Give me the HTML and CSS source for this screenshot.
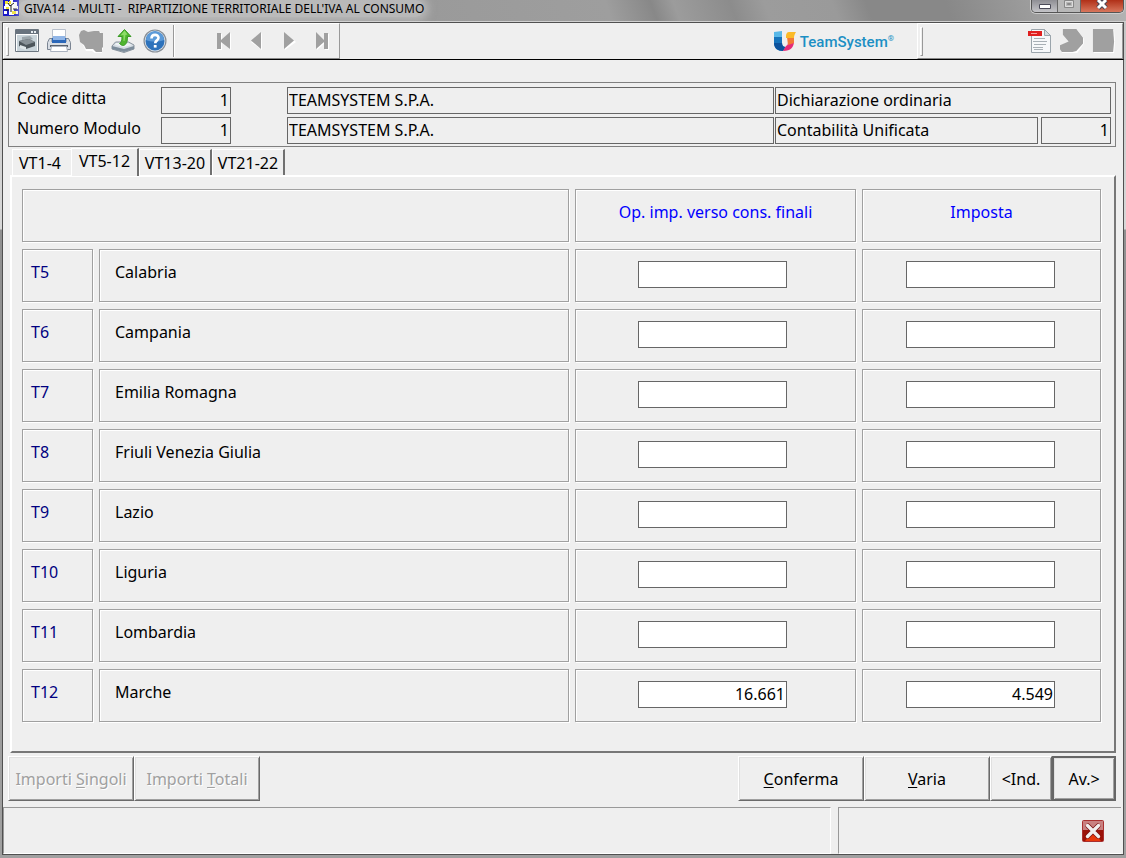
FILE: index.html
```html
<!DOCTYPE html>
<html lang="it">
<head>
<meta charset="utf-8">
<meta name="viewport" content="width=device-width, initial-scale=1">
<title>GIVA14 - MULTI - RIPARTIZIONE TERRITORIALE DELL'IVA AL CONSUMO</title>
<link rel="stylesheet" href="styles.css">
</head>
<body>
<div class="window">
  <header class="titlebar">
    <svg class="app-icon" viewBox="0 0 16 16" aria-hidden="true">
      <path fill="#1a1ac8" d="M0 0h16v16H0z"/>
      <path fill="#fff" d="M2 2h12v4H2zM1 6h14v3H1zM6 9h5v6H6zM12 11h3v3h-3zM1 11h3v3H1zM7 0h3v2H7z"/>
      <path fill="#f4e430" d="M2 1h3v3H2zM3 7h3v2H3zM9 11h4v3H9zM6 1h2v3H6z"/>
      <path stroke="#111" fill="none" d="M5 3l2 3 4-3M8 5v7M3 10h3M10 9h4"/>
    </svg>
    <h1 class="title">GIVA14 &nbsp;- MULTI - &nbsp;RIPARTIZIONE TERRITORIALE DELL'IVA AL CONSUMO</h1>
    <div class="caption">
      <button class="cap" type="button" aria-label="Riduci a icona"><svg width="12" height="11" viewBox="0 0 12 11"><path fill="#fff" stroke="#4a4a58" d="M.5 4.500h11v4H.5z"/></svg></button>
      <button class="cap cap-mid" type="button" aria-label="Ingrandisci" disabled><svg width="12" height="11" viewBox="0 0 12 11"><path fill="none" stroke="#888" d="M1.500 .5h9v7h-9zM4.500 3.500h3v1h-3z"/><path fill="none" stroke="#ddd" d="M2.500 1.500h7v5h-7z"/></svg></button>
      <button class="cap cap-close" type="button" aria-label="Chiudi"><svg width="14" height="11" viewBox="0 0 14 11"><path stroke="#4b4655" stroke-width="5" d="M3 0l8 8M11 0L3 8"/><path stroke="#fff" stroke-width="3" d="M3 0l8 8M11 0L3 8"/></svg></button>
    </div>
  </header>

  <div class="toolbar">
    <div class="tools tools-left">
      <span class="grip"></span>
      <button class="tool" type="button" aria-label="Stampa video"><svg viewBox="0 0 24 24"><path fill="#fff" stroke="#6c7680" d="M.5.5h23v22H.5z"/><path fill="#68737e" d="M1 1h22v4H1z"/><path fill="#e8eef2" d="M16 2h2v2h-2zM19 2h2v2h-2z"/><path fill="#c9d4da" d="M2 6h20v16H2z"/><path fill="#9ba5ab" d="M7 8l8-1 3 3-11 3z"/><path fill="#4d565c" d="M4 12l10-2 6 3v4l-9 3-7-3z"/><path fill="#889197" d="M4 12l10-2 6 3-9 3z"/><path fill="#dfe6e9" d="M5 16l6 2v3l-6-2z"/></svg></button>
      <button class="tool" type="button" aria-label="Stampa"><svg viewBox="0 0 24 24"><path fill="#fff" stroke="#b8c0cc" d="M5.500.5h13V11h-13z"/><path fill="#7fa5da" d="M6 8h12v5H6z"/><path fill="#d8dde4" stroke="#7b8593" d="M2.500 9.500H5V13h14V9.500h2.500l2 4v7H.5v-7z"/><path fill="#2b67b9" d="M5 9h14v5H5z"/><path fill="#91b6e7" d="M6 7h12v4H6z"/><path fill="#59616c" d="M3 16h18v2H3z"/><path fill="#fff" stroke="#aab2bf" d="M4.500 17.500h15l1 5h-17z"/></svg></button>
      <button class="tool" type="button" aria-label="Funzione" disabled><svg viewBox="0 0 24 24"><path fill="#fff" d="M2 5l4-2 5 2 4-2h6l4 3v14l-2 1v4h-6l-4-3H7l-3-6-3-4z"/><path fill="#a0a0a0" d="M0 6l2-4 3-1 4 2 6-1h5l1 2h3v14l-1 1v4h-6l-3-3H7l-2-4-4-3z"/></svg></button>
      <button class="tool" type="button" aria-label="Esporta"><svg viewBox="0 0 24 24"><path fill="#d4dce3" stroke="#89939d" d="M4.500 13h13l5.500 3v4l-10 3.500L1 20v-3z"/><path fill="#7d8d9b" d="M1 17l12 3 10-3v3l-10 3-12-3z"/><path fill="#eef2f5" d="M5 14h12l4 2-8 2-9-2z"/><path fill="#4fb52f" stroke="#3a9a26" d="M13.500.5l6.500 7h-3.500c0 5-1 8-4 9-2 0-3-1-4-2 2-1 2.500-3 2.500-7H7z"/><path fill="#8ddd68" d="M13.500 1.500l3 4-2 .5-1 6-1 0 0-6-3 .5z"/></svg></button>
      <button class="tool" type="button" aria-label="Aiuto"><svg viewBox="0 0 24 24"><circle cx="12" cy="12" r="11.500" fill="#858c94"/><circle cx="12" cy="12" r="10.400" fill="#dbe2e9"/><circle cx="12" cy="12" r="9.500" fill="#2d72bb"/><path fill="#5c9ad8" d="M3 11a9 9 0 0118 0c-5 2-13 2-18 0z"/><path fill="none" stroke="#fff" stroke-width="2.600" d="M8.500 9.500c0-5 7-4.500 7-.7 0 2.700-3.300 2.500-3.300 5.500"/><path fill="#fff" d="M10.800 16h2.800v2.600h-2.800z"/></svg></button>
      <span class="rule"></span>
      <button class="nav" type="button" aria-label="Primo" disabled><svg viewBox="0 0 18 20"><path fill="#fff" d="M3 3h4v7l9-8v17l-9-8v8H3z"/><path fill="#a0a0a0" d="M2 2h4v7l9-8v17l-9-7v7H2z"/></svg></button>
      <button class="nav" type="button" aria-label="Precedente" disabled><svg viewBox="0 0 18 20"><path fill="#fff" d="M3 11l11-9v17z"/><path fill="#a0a0a0" d="M3 9.500l10-8.500v17z"/></svg></button>
      <button class="nav" type="button" aria-label="Successivo" disabled><svg viewBox="0 0 18 20"><path fill="#fff" d="M4 2l11 9-11 8z"/><path fill="#a0a0a0" d="M3 1l10 8.500-10 8.500z"/></svg></button>
      <button class="nav" type="button" aria-label="Ultimo" disabled><svg viewBox="0 0 18 20"><path fill="#fff" d="M3 2l8 8V3h4v16h-4v-7l-8 7z"/><path fill="#a0a0a0" d="M2 1l8 8V2h4v16h-4v-7l-8 7z"/></svg></button>
    </div>
    <div class="brand">
      <svg width="22" height="20" viewBox="0 0 22 20" aria-hidden="true">
        <path fill="#58b8e8" d="M0 1l8-1v7H0z"/><path fill="#1673bb" d="M0 6h8v6c0 3 2 4 4 4l-3 4C3 20 0 17 0 12z"/><path fill="#0d529c" d="M0 12h8c0 3 2 4 3 4l-2 4c-5 0-9-3-9-8z"/>
        <path fill="#e62c77" d="M9 20l3-5c2-1 2-2 2-5h6c0 6-3 10-11 10z"/><path fill="#f27a36" d="M13 6h7v6l-6 2z"/><path fill="#fbba28" d="M12 5c0-2 1-4 3-4h7c-1 2-2 3-2 6h-8z"/>
      </svg>
      <span class="brand-name">TeamSystem<sup>®</sup></span>
    </div>
    <div class="tools tools-right">
      <span class="grip"></span>
      <button class="tool" type="button" aria-label="PDF"><svg viewBox="0 0 24 24"><path fill="#f6f8fa" stroke="#9ba5ac" d="M3.500.5h13l6 6v17h-19z"/><path fill="#d5dce1" stroke="#9ba5ac" d="M16.500.5v6h6z"/><path fill="#e02020" d="M0 2h14v5H0z"/><path stroke="#f6a0a0" d="M3 4.500h6"/><path stroke="#a8b0b6" d="M6 9.500h11M5 12.500h14M6 15.500h12M5 18.500h10M6 20.500h9"/></svg></button>
      <button class="tool" type="button" aria-label="Avanti" disabled><svg viewBox="0 0 25 25"><path fill="#fff" d="M5 1h13l7 9v5l-7 10H2l-1-6 9-6z"/><path fill="#a0a0a0" d="M3 0h14l7 9v6l-7 8-4 1H2l-2-3v-4l9-4-6-7z"/></svg></button>
      <button class="tool" type="button" aria-label="Stop" disabled><svg viewBox="0 0 25 25"><path fill="#fff" d="M2 1h21l1 12-1 12H2z"/><path fill="#a0a0a0" d="M1 0h21l1 13-1 11H1z"/></svg></button>
    </div>
  </div>

  <main class="content">
    <section class="company">
      <div class="company-row">
        <label class="company-label" for="ditta">Codice ditta</label>
        <input class="field field-num" id="ditta" value="1" readonly>
        <input class="field field-name" aria-label="Ragione sociale" value="TEAMSYSTEM S.P.A." readonly>
        <div class="company-end"><input class="field field-fill" aria-label="Tipo dichiarazione" value="Dichiarazione ordinaria" readonly></div>
      </div>
      <div class="company-row">
        <label class="company-label" for="modulo">Numero Modulo</label>
        <input class="field field-num" id="modulo" value="1" readonly>
        <input class="field field-name" aria-label="Denominazione modulo" value="TEAMSYSTEM S.P.A." readonly>
        <div class="company-end"><input class="field field-fill" aria-label="Contabilità" value="Contabilità Unificata" readonly><input class="field field-num" aria-label="Numero contabilità" value="1" readonly></div>
      </div>
    </section>

    <div class="tabs" role="tablist">
      <button class="tab tab-first" type="button" role="tab">VT1-4</button>
      <button class="tab tab-active" type="button" role="tab" aria-selected="true">VT5-12</button>
      <button class="tab" type="button" role="tab">VT13-20</button>
      <button class="tab" type="button" role="tab">VT21-22</button>
    </div>

    <section class="panel">
      <table class="grid">
        <colgroup><col class="col-code"><col><col class="col-ops"><col class="col-tax"></colgroup>
        <thead>
          <tr><th colspan="2"></th><th class="ops">Op. imp. verso cons. finali</th><th class="tax">Imposta</th></tr>
        </thead>
        <tbody>
          <tr><td class="code">T5</td><td class="region">Calabria</td><td class="ops"><input class="amount" aria-label="Calabria, operazioni"></td><td class="tax"><input class="amount" aria-label="Calabria, imposta"></td></tr>
          <tr><td class="code">T6</td><td class="region">Campania</td><td class="ops"><input class="amount" aria-label="Campania, operazioni"></td><td class="tax"><input class="amount" aria-label="Campania, imposta"></td></tr>
          <tr><td class="code">T7</td><td class="region">Emilia Romagna</td><td class="ops"><input class="amount" aria-label="Emilia Romagna, operazioni"></td><td class="tax"><input class="amount" aria-label="Emilia Romagna, imposta"></td></tr>
          <tr><td class="code">T8</td><td class="region">Friuli Venezia Giulia</td><td class="ops"><input class="amount" aria-label="Friuli Venezia Giulia, operazioni"></td><td class="tax"><input class="amount" aria-label="Friuli Venezia Giulia, imposta"></td></tr>
          <tr><td class="code">T9</td><td class="region">Lazio</td><td class="ops"><input class="amount" aria-label="Lazio, operazioni"></td><td class="tax"><input class="amount" aria-label="Lazio, imposta"></td></tr>
          <tr><td class="code">T10</td><td class="region">Liguria</td><td class="ops"><input class="amount" aria-label="Liguria, operazioni"></td><td class="tax"><input class="amount" aria-label="Liguria, imposta"></td></tr>
          <tr><td class="code">T11</td><td class="region">Lombardia</td><td class="ops"><input class="amount" aria-label="Lombardia, operazioni"></td><td class="tax"><input class="amount" aria-label="Lombardia, imposta"></td></tr>
          <tr><td class="code">T12</td><td class="region">Marche</td><td class="ops"><input class="amount" aria-label="Marche, operazioni" value="16.661"></td><td class="tax"><input class="amount" aria-label="Marche, imposta" value="4.549"></td></tr>
        </tbody>
      </table>
    </section>

    <div class="actions">
      <button class="action" type="button" disabled><span>Importi <u>S</u>ingoli</span></button>
      <button class="action action-last" type="button" disabled><span>Importi <u>T</u>otali</span></button>
      <button class="action" type="button"><span><u>C</u>onferma</span></button>
      <button class="action" type="button"><span><u>V</u>aria</span></button>
      <button class="action action-small" type="button">&lt;Ind.</button>
      <button class="action action-small action-default" type="button">Av.&gt;</button>
    </div>
  </main>

  <footer class="status">
    <div class="status-text"></div>
    <div class="status-end">
      <button class="exit" type="button" aria-label="Esci"><svg width="22" height="22" viewBox="0 0 22 22"><rect width="22" height="22" rx="2" fill="#a93030"/><path fill="#c98080" d="M1 1h20v9H1z"/><path fill="#9b1208" d="M1 10h20v11H1z"/><path fill="#e8380c" d="M11 12l8 9H3z"/><path stroke="#7b1010" stroke-width="5" stroke-linecap="round" d="M6 6l10 10M16 6L6 16"/><path stroke="#f2eeee" stroke-width="3.400" stroke-linecap="round" d="M5.500 5.500l11 11M16.500 5.500l-11 11"/></svg></button>
    </div>
  </footer>
</div>
</body>
</html>
```

FILE: styles.css
```css
* { box-sizing: border-box; }

body {
  margin: 0;
  background: #efefef;
  color: #000;
  font: 16px/20px "Noto Sans", sans-serif;
}

button, input { font: inherit; color: inherit; margin: 0; border-radius: 0; }
svg { display: block; }

.window {
  display: flex;
  flex-direction: column;
  min-height: 100vh;
  padding: 0 2px 3px;
  background: linear-gradient(#c4c4c4 0, #d8d8d8 229px, #909090 230px, #a0a0a0);
}

/* Title bar */
.titlebar {
  display: flex;
  align-items: flex-start;
  height: 22px;
  margin: 0 -2px;
  padding-left: 3px;
  background: linear-gradient(70deg, #aaa 0, #999 34%, #9e9e9e 54%, #888 58%, #9c9c9c 60%, #8c8c8c 65%, #9c9c9c 68%, #9a9a9a 74%, #888 77%, #888 84%, #b4b4b4 100%);
  border-bottom: 1px solid #d0d0d0;
}
.app-icon { width: 16px; height: 16px; }
.title {
  margin: 0 auto 0 0;
  padding: 0 0 0 5px;
  border-radius: 8px;
  background: rgba(215, 215, 215, .5);
  box-shadow: 0 0 8px 4px rgba(215, 215, 215, .5);
  font: 12px/17px "Noto Sans", sans-serif;
}
.caption {
  display: flex;
  height: 13px;
  margin-right: 2px;
  border: 1px solid #555;
  border-top: 0;
  border-radius: 0 0 5px 5px;
  box-shadow: 0 0 0 1px #ccc;
  overflow: hidden;
}
.cap {
  display: flex;
  justify-content: center;
  width: 25px;
  height: 12px;
  padding: 0;
  border: 0;
  background: linear-gradient(#8e8e94, #c4c4c8);
}
.cap-mid { width: 24px; border: solid #666; border-width: 0 1px; background: #b8b8b8; }
.cap-close { width: 42px; background: linear-gradient(#b03018, #d8765c); }

/* Toolbar */
.toolbar {
  display: flex;
  height: 38px;
  border: 1px solid #505050;
  border-bottom-color: #000;
  background: #efefef;
}
.tools { display: flex; align-items: center; border: 1px solid #fff; border-right-color: #999; border-bottom-color: #888; }
.tools > * { flex: none; }
.tools-left { width: 337px; padding-left: 2px; }
.tools-right { width: 206px; padding: 0 6px 0 2px; }
.grip { width: 3px; height: 29px; border: 1px solid #999; border-left-color: #fff; border-top-color: #fff; }
.tool { width: 24px; height: 24px; margin-left: 8px; padding: 0; border: 0; background: none; }
.tools-left .grip { margin-right: -2px; }
.tools-right .grip { margin-right: auto; }
.rule { width: 2px; height: 32px; margin: 0 40px 0 6px; background: linear-gradient(90deg, #999 50%, #fff 50%); }
.nav { width: 18px; height: 20px; margin-right: 15px; padding: 0; border: 0; background: none; }
.nav:last-child { margin-right: 0; }
.brand { display: flex; align-items: center; gap: 4px; margin-left: auto; margin-right: 23px; }
.brand-name { padding-top: 2px; color: #1c8fc4; font: 500 15px/20px Roboto, sans-serif; }
.brand-name sup { font-size: 8px; line-height: 8px; vertical-align: 6px; }

/* Company data */
.content {
  display: flex;
  flex: 1;
  flex-direction: column;
  padding: 22px 7px 6px 5px;
  background: #efefef;
  border: solid #505050;
  border-width: 0 1px;
}
.company {
  display: flex;
  flex-direction: column;
  gap: 3px;
  padding: 4px 4px 2px 8px;
  border: 1px solid #808080;
}
.company-row { display: flex; }
.company-label { width: 144px; line-height: 22px; }
.field {
  height: 27px;
  min-width: 0;
  padding: 0 1px 1px;
  border: 1px solid #666;
  background: #efefef;
}
.field-num { width: 70px; text-align: right; }
.field-name { flex: 1; margin-left: 56px; margin-right: 1px; }
.field-fill { flex: 1; }
.company-end { display: flex; gap: 3px; width: 336px; }

/* Tabs */
.tabs { display: flex; align-items: flex-end; margin-top: 1px; padding-left: 4px; }
.tab {
  width: 73px;
  height: 26px;
  padding: 0;
  border: solid;
  border-width: 1px 2px 0 1px;
  border-color: #fff #707070 #fff #fff;
  background: #efefef;
}
.tab-first { width: 59px; padding-right: 4px; border-right: 0; }
.tab-active { z-index: 1; width: 68px; height: 28px; margin-bottom: -1px; padding-bottom: 3px; }

/* Amount grid */
.panel {
  flex: 1;
  margin-left: 2px;
  padding: 5px 7px 20px 4px;
  border: 2px solid;
  border-color: #fff #777 #777 #fff;
}
.grid { width: 100%; table-layout: fixed; border-spacing: 6px 7px; }
.col-code { width: 71px; }
.col-ops { width: 281px; }
.col-tax { width: 239px; }
.grid th, .grid td {
  height: 53px;
  padding: 12px 8px 0;
  border: 1px solid #a0a0a0;
  box-shadow: 1px 1px 0 #fff, inset 1px 1px 0 #fff;
  font-weight: normal;
  vertical-align: top;
}
.grid th { color: #00f; }
.grid .code { color: #000080; }
.grid .region { padding-left: 15px; }
.grid .ops, .grid .tax { text-align: center; }
.grid td.ops { padding: 11px 6px 0 0; }
.grid td.tax { padding: 11px 2px 0 0; }
.amount {
  display: block;
  width: 149px;
  height: 27px;
  margin: 0 auto;
  padding: 0 1px 1px;
  border: 1px solid #666;
  background: #fff;
  text-align: right;
}

/* Actions */
.actions { display: flex; margin-top: 3px; }
.action {
  width: 126px;
  height: 45px;
  padding: 0;
  border: solid;
  border-width: 1px 1px 1px 1px;
  border-color: #fff #6a6a6a #6a6a6a #fff;
  box-shadow: inset 1px 1px 0 #e0e0e0, inset -1px -1px 0 #a0a0a0;
  background: #efefef;
}
.action:disabled { color: #a0a0a0; text-shadow: 1px 1px 0 #fff; }
.action-last { margin-right: auto; }
.action-small { width: 62px; }
.action-default { width: 64px; border: 2px solid #666; }
.action u { text-underline-offset: 2px; }

/* Status bar */
.status {
  display: flex;
  gap: 7px;
  height: 48px;
  padding-right: 2px;
  border: solid #505050;
  border-width: 0 1px 1px;
  background: #efefef;
}
.status-text, .status-end { border: 1px solid; border-color: #999 #fff #fff #999; }
.status-text { flex: 1; }
.status-end { display: flex; align-items: center; justify-content: flex-end; width: 283px; padding-right: 17px; border-right: 0; }
.exit { padding: 0; border: 0; background: none; }
```
